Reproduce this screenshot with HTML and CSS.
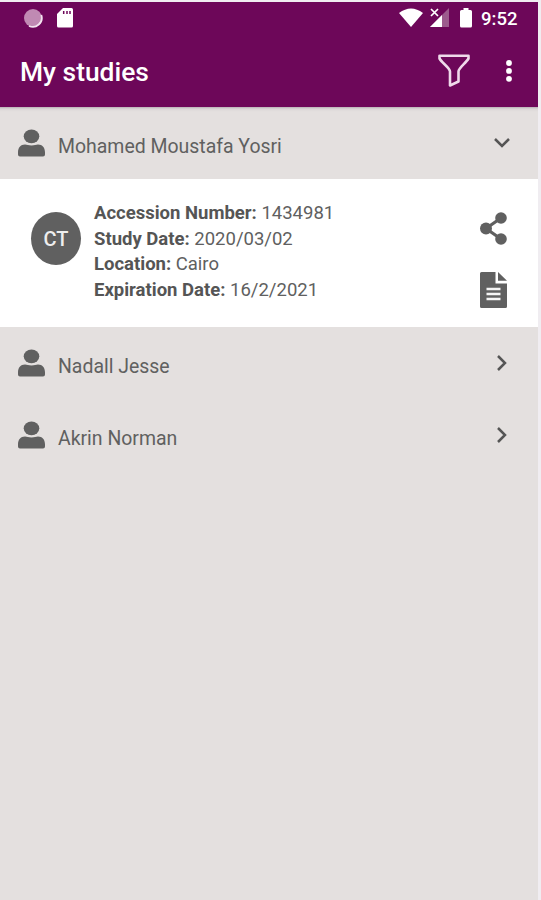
FILE: index.html
```html
<!DOCTYPE html>
<html lang="en">
<head>
<meta charset="utf-8">
<title>My studies</title>
<link rel="stylesheet" href="styles.css">
</head>
<body>
<svg class="defs" width="0" height="0" aria-hidden="true">
  <symbol id="person" viewBox="0 0 27 28">
    <ellipse cx="13.5" cy="7.3" rx="7.8" ry="6.9"/>
    <path d="M0 23.500C0 18.800 2.500 15.600 7 15.600C9 15.600 10.500 16.500 13.500 16.500S18 15.600 20 15.600C24.500 15.600 27 18.800 27 23.500V25.500Q27 27.500 25 27.500H2Q0 27.500 0 25.500Z"/>
  </symbol>
  <symbol id="chevron" viewBox="0 0 10 16">
    <path d="M1 1L8 8L1 15" fill="none" stroke="currentColor" stroke-width="2.500"/>
  </symbol>
</svg>
<div class="screen">
  <header class="top">
    <div class="status">
      <svg class="spinner" viewBox="0 0 20 20"><circle cx="10" cy="10" r="9" fill="#c08ab3"/><path d="M18.300 7A9 9 0 0 1 6 18" fill="none" stroke="#f3e4ef" stroke-width="1.800"/></svg>
      <svg class="sd" viewBox="0 0 16 20"><path d="M6 0H14.500Q16 0 16 1.500V18Q16 19.500 14.500 19.500H1.500Q0 19.500 0 18V6Z" fill="#fff"/><path d="M6.700 3V6M10 3V6M13 3V6" stroke="#6d0759" stroke-width="1.500"/></svg>
      <div class="signals">
        <svg class="wifi" viewBox="0 0 24 19"><path d="M0 5Q12-4 24 5L12 19Z" fill="#fff"/></svg>
        <svg class="cell" viewBox="0 0 19 19"><path d="M19 0V19H0Z" fill="#9c5b8d"/><path d="M12 7V19H0Z" fill="#fff"/><path d="M0 0H10V9H0Z" fill="#6d0759"/><path d="M1 1L8 8M8 1L1 8" stroke="#fff" stroke-width="1.700"/></svg>
        <svg class="battery" viewBox="0 0 12 20"><path d="M3.500 0H8.500V2H10.500Q12 2 12 3.500V18Q12 19.500 10.500 19.500H1.500Q0 19.500 0 18V3.500Q0 2 1.500 2H3.500Z" fill="#fff"/></svg>
        <span class="clock">9:52</span>
      </div>
    </div>
    <div class="bar">
      <h1>My studies</h1>
      <svg class="filter" viewBox="0 0 32 34"><path d="M1.500 1.700H30.500V4.500C28 9 20.500 14 20.500 17.500V27.500L12 31.500V17.500C12 14 4 9 1.500 4.500Z" fill="none" stroke="#efd9ea" stroke-width="2.600" stroke-linejoin="round"/></svg>
      <svg class="more" viewBox="0 0 6 22"><g fill="#fff"><circle cx="3" cy="3" r="2.900"/><circle cx="3" cy="10.900" r="2.900"/><circle cx="3" cy="18.800" r="2.900"/></g></svg>
    </div>
  </header>
  <main>
    <section class="row">
      <svg class="person"><use href="#person"/></svg>
      <span class="name">Mohamed Moustafa Yosri</span>
      <svg class="chevron open"><use href="#chevron"/></svg>
    </section>
    <section class="study">
      <div class="badge">CT</div>
      <div class="details">
        <p><b>Accession Number:</b> 1434981</p>
        <p><b>Study Date:</b> 2020/03/02</p>
        <p><b>Location:</b> Cairo</p>
        <p><b>Expiration Date:</b> 16/2/2021</p>
      </div>
      <div class="actions">
        <svg class="share" viewBox="0 0 27 33"><path d="M21 6L6 16.500L21 27" fill="none" stroke="currentColor" stroke-width="3.200"/><circle cx="21" cy="6" r="5.800"/><circle cx="6" cy="16.500" r="6"/><circle cx="21" cy="27" r="5.800"/></svg>
        <svg class="doc" viewBox="0 0 27 36"><path d="M1.500 0H15.500V11.500H27V34.500Q27 36 25.500 36H1.500Q0 36 0 34.500V1.500Q0 0 1.500 0ZM18 0L27 8.800H18Z"/><path d="M6.500 17H20.500M6.500 22H20.500M6.500 27H20.500" stroke="#f4f4f4" stroke-width="2.600"/></svg>
      </div>
    </section>
    <section class="row">
      <svg class="person"><use href="#person"/></svg>
      <span class="name">Nadall Jesse</span>
      <svg class="chevron"><use href="#chevron"/></svg>
    </section>
    <section class="row">
      <svg class="person"><use href="#person"/></svg>
      <span class="name">Akrin Norman</span>
      <svg class="chevron"><use href="#chevron"/></svg>
    </section>
  </main>
</div>
</body>
</html>
```
FILE: styles.css
```css
* { box-sizing: border-box; }
body { margin: 0; background: #f0edf1; font-family: Roboto, sans-serif; color: #606060; }
svg { display: block; flex: none; fill: currentColor; }
.defs { display: none; }
.screen { width: 538px; height: 900px; padding-top: 2px; display: flex; flex-direction: column; overflow: hidden; }
.top { height: 105px; flex: none; background: #6d0759; color: #fff; }
.status { height: 34px; display: flex; align-items: flex-start; padding: 6px 20px 0 23px; }
.spinner { width: 20px; height: 20px; }
.sd { width: 16px; height: 20px; margin-left: 14px; }
.signals { display: flex; margin-left: auto; }
.wifi { width: 24px; height: 19px; }
.cell { width: 19px; height: 19px; margin-left: 7px; }
.battery { width: 12px; height: 20px; margin-left: 11px; }
.clock { width: 37px; margin-left: 9px; font-size: 18.5px; font-weight: 500; line-height: 22px; white-space: nowrap; }
.bar { height: 71px; display: flex; align-items: center; padding: 0 26px 0 20px; }
h1 { margin: 1px auto 0 0; font-size: 26.400px; font-weight: 500; line-height: 32px; }
.filter { width: 32px; height: 34px; margin: -1px 36px 0 0; }
.more { width: 6px; height: 22px; margin-top: -1px; }
main { flex: 1; background: linear-gradient(#b9b0b5, #dcd8d8 2px, #e4e0df 5px); }
.row { height: 72px; display: flex; align-items: flex-start; padding: 22px 26px 0 18px; }
.person { width: 27px; height: 28px; }
.name { margin: 6px auto 0 13px; font-size: 19.450px; line-height: 24px; white-space: nowrap; }
.chevron { width: 10px; height: 16px; margin: 6px 5px 0 0; color: #555; }
.chevron.open { transform: rotate(90deg); }
.study { height: 148px; background: #fff; display: flex; align-items: flex-start; padding: 22px 31px 0 31px; }
.badge { width: 50px; height: 53px; margin-top: 11px; border-radius: 50%; background: #606060; color: #eee; display: flex; align-items: center; justify-content: center; font-size: 20px; font-weight: 500; }
.details { margin-left: 13px; font-size: 18.500px; line-height: 25.600px; white-space: nowrap; }
.details p { margin: 0; }
.details b { font-weight: 700; color: #555; }
.actions { margin-left: auto; padding-top: 11px; }
.share { width: 27px; height: 33px; }
.doc { width: 27px; height: 36px; margin-top: 27px; }
```
